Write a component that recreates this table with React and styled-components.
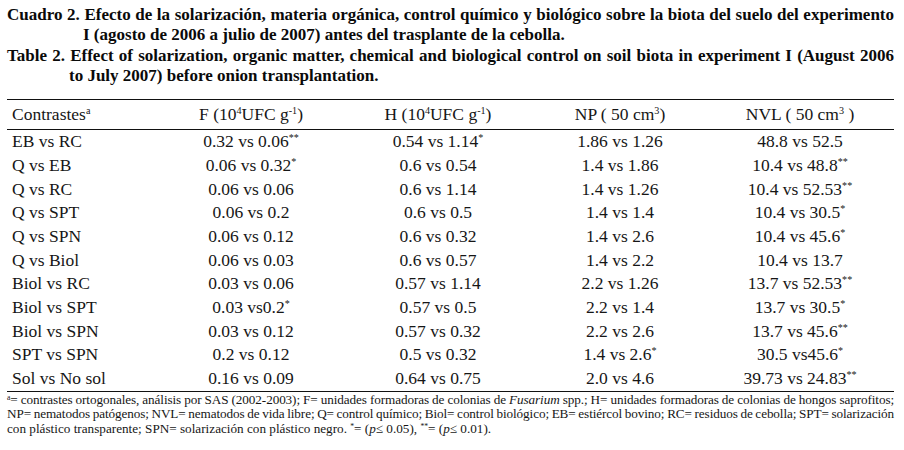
import React from 'react';
import styled, { createGlobalStyle } from 'styled-components';

const GlobalStyle = createGlobalStyle`
  html, body {
    margin: 0;
    padding: 0;
    background: #ffffff;
  }
  body {
    font-family: "Liberation Serif", "Times New Roman", serif;
    color: #161616;
  }
`;

const ROWS = [
  ['EB vs RC', ['0.32 vs 0.06', '**'], ['0.54 vs 1.14', '*'], ['1.86 vs 1.26'], ['48.8 vs 52.5']],
  ['Q vs EB', ['0.06 vs 0.32', '*'], ['0.6 vs 0.54'], ['1.4 vs 1.86'], ['10.4 vs 48.8', '**']],
  ['Q vs RC', ['0.06 vs 0.06'], ['0.6 vs 1.14'], ['1.4 vs 1.26'], ['10.4 vs 52.53', '**']],
  ['Q vs SPT', ['0.06 vs 0.2'], ['0.6 vs 0.5'], ['1.4 vs 1.4'], ['10.4 vs 30.5', '*']],
  ['Q vs SPN', ['0.06 vs 0.12'], ['0.6 vs 0.32'], ['1.4 vs 2.6'], ['10.4 vs 45.6', '*']],
  ['Q vs Biol', ['0.06 vs 0.03'], ['0.6 vs 0.57'], ['1.4 vs 2.2'], ['10.4 vs 13.7']],
  ['Biol vs RC', ['0.03 vs 0.06'], ['0.57 vs 1.14'], ['2.2 vs 1.26'], ['13.7 vs 52.53', '**']],
  ['Biol vs SPT', ['0.03 vs0.2', '*'], ['0.57 vs 0.5'], ['2.2 vs 1.4'], ['13.7 vs 30.5', '*']],
  ['Biol vs SPN', ['0.03 vs 0.12'], ['0.57 vs 0.32'], ['2.2 vs 2.6'], ['13.7 vs 45.6', '**']],
  ['SPT vs SPN', ['0.2 vs 0.12'], ['0.5 vs 0.32'], ['1.4 vs 2.6', '*'], ['30.5 vs45.6', '*']],
  ['Sol vs No sol', ['0.16 vs 0.09'], ['0.64 vs 0.75'], ['2.0 vs 4.6'], ['39.73 vs 24.83', '**']],
];

export default function App() {
  return (
    <Page>
      <GlobalStyle />
      <Caption>
        <CapLine $indent={76} $full>
          Cuadro 2. Efecto de la solarización, materia orgánica, control químico y biológico sobre la biota del suelo del experimento
        </CapLine>
        <CapLine $indent={76}>
          I (agosto de 2006 a julio de 2007) antes del trasplante de la cebolla.
        </CapLine>
        <CapLine $indent={62} $full>
          Table 2. Effect of solarization, organic matter, chemical and biological control on soil biota in experiment I (August 2006
        </CapLine>
        <CapLine $indent={62}>
          to July 2007) before onion transplantation.
        </CapLine>
      </Caption>

      <Table>
        <HeadRow>
          <LabelCell>Contrastes<Sup>a</Sup></LabelCell>
          <Cell>F (10<Sup>4</Sup>UFC g<Sup>-1</Sup>)</Cell>
          <Cell>H (10<Sup>4</Sup>UFC g<Sup>-1</Sup>)</Cell>
          <Cell>NP ( 50 cm<Sup>3</Sup>)</Cell>
          <Cell>NVL ( 50 cm<Sup>3</Sup> )</Cell>
        </HeadRow>
        {ROWS.map(([label, ...vals]) => (
          <Row key={label}>
            <LabelCell>{label}</LabelCell>
            {vals.map(([v, star], i) => (
              <Cell key={i}>
                {v}
                {star && <Sup>{star}</Sup>}
              </Cell>
            ))}
          </Row>
        ))}
      </Table>

      <Notes>
        <NoteLine $full $tight>
          <Sup>a</Sup>= contrastes ortogonales, análisis por SAS (2002-2003); F= unidades formadoras de colonias de <i>Fusarium</i> spp.; H= unidades formadoras de colonias de hongos saprofitos;
        </NoteLine>
        <NoteLine $full $tight>
          NP= nematodos patógenos; NVL= nematodos de vida libre; Q= control químico; Biol= control biológico; EB= estiércol bovino; RC= residuos de cebolla; SPT= solarización
        </NoteLine>
        <NoteLine>
          con plástico transparente; SPN= solarización con plástico negro. <Sup>*</Sup>= (<i>p</i>≤ 0.05), <Sup>**</Sup>= (<i>p</i>≤ 0.01).
        </NoteLine>
      </Notes>
    </Page>
  );
}

const Page = styled.div`
  width: 887px;
  padding: 5px 10px 0 7px;
`;

const Caption = styled.div`
  font-weight: bold;
  font-size: 17px;
  line-height: 20.3px;
  color: #0a0a0a;
`;

const CapLine = styled.div`
  white-space: nowrap;
  padding-left: ${(p) => p.$indent}px;
  text-indent: ${(p) => (p.$full ? -p.$indent : 0)}px;
  text-align: ${(p) => (p.$full ? 'justify' : 'left')};
  text-align-last: ${(p) => (p.$full ? 'justify' : 'auto')};
`;

const Table = styled.div`
  margin-top: 13px;
  border-top: 1px solid #111;
  border-bottom: 1px solid #111;
  font-size: 17.5px;
`;

const Row = styled.div`
  display: grid;
  grid-template-columns: 153px 182px 192px 172px 188px;
  align-items: center;
  height: 23.7px;
  line-height: 23.7px;
  white-space: nowrap;
`;

const HeadRow = styled(Row)`
  height: 29px;
  line-height: 29px;
  border-bottom: 1px solid #111;
`;

const LabelCell = styled.div`
  padding-left: 5px;
`;

const Cell = styled.div`
  text-align: center;
`;

const Sup = styled.sup`
  font-size: 0.58em;
  line-height: 0;
  vertical-align: 0.55em;
`;

const Notes = styled.div`
  font-size: 13.2px;
  line-height: 14.4px;
  padding-top: 1px;
`;

const NoteLine = styled.div`
  white-space: nowrap;
  word-spacing: ${(p) => (p.$tight ? '-0.5px' : '0')};
  letter-spacing: ${(p) => (p.$tight ? '-0.1px' : '0')};
  text-align: ${(p) => (p.$full ? 'justify' : 'left')};
  text-align-last: ${(p) => (p.$full ? 'justify' : 'auto')};
`;
